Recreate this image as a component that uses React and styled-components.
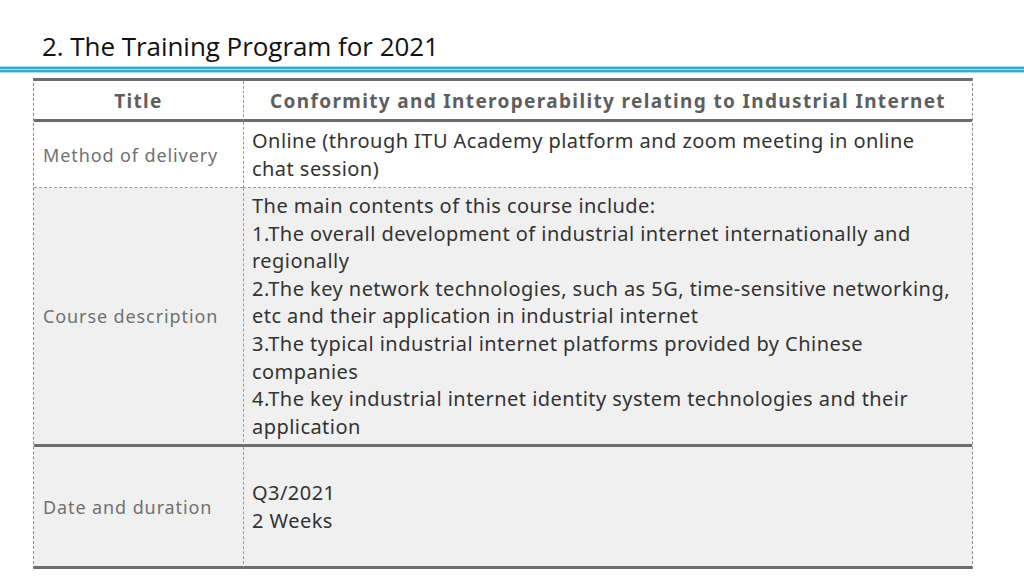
import React from 'react'
import styled, { createGlobalStyle } from 'styled-components'

const Global = createGlobalStyle`
  html, body {
    margin: 0;
    padding: 0;
    background: #fff;
  }
  body {
    width: 1024px;
    height: 576px;
    overflow: hidden;
    font-family: "Noto Sans", "Open Sans", sans-serif;
  }
`

const Slide = styled.div`
  display: flex;
  flex-direction: column;
  width: 1024px;
  height: 576px;
`

const Heading = styled.h1`
  margin: 0;
  padding: 29px 0 0 42px;
  height: 37px;
  font-family: "Open Sans", "Noto Sans", sans-serif;
  font-weight: 400;
  font-size: 26px;
  line-height: 34px;
  letter-spacing: -0.05px;
  color: #111;
`

const Rule = styled.div`
  height: 7px;
  background: linear-gradient(
    to bottom,
    #9fe0f4 0 1px,
    #2fa9d6 1px 3px,
    #a6e3f5 3px 4px,
    #2fa9d6 4px 6px,
    #9fe0f4 6px 7px
  );
`

const Table = styled.div`
  margin: 5px 0 0 33px;
  width: 938px;
  display: grid;
  grid-template-columns: 209px 1fr;
  border-top: 3px solid #6d6d6d;
  border-left: 1px dashed #8a8a8a;
  border-right: 1px dashed #8a8a8a;
`

const Row = styled.div`
  display: contents;
`

const Cell = styled.div`
  display: flex;
  align-items: center;
  background: ${p => (p.$shaded ? '#f0f0f0' : '#fff')};
  border-bottom: ${p => (p.$heavy ? '3px solid #6d6d6d' : '1px dashed #9a9a9a')};
  border-left: ${p => (p.$first ? 'none' : '1px dashed #9a9a9a')};
  height: ${p => p.$h}px;
  box-sizing: border-box;
`

const HeadCell = styled(Cell)`
  justify-content: center;
  padding-top: 2px;
  font-weight: 700;
  font-size: 19px;
  letter-spacing: 1.35px;
  color: #5e5e5e;
`

const Label = styled(Cell)`
  padding-left: 9px;
  font-size: 18px;
  letter-spacing: 0.9px;
  color: #707070;
`

const Body = styled(Cell)`
  padding: 0 8px;
  font-size: 20px;
  letter-spacing: 0.45px;
  line-height: 27.6px;
  color: #333;
  align-items: ${p => (p.$top ? 'flex-start' : 'center')};
  padding-top: ${p => (p.$top ? '4px' : '0')};
`

const Lines = styled.div`
  display: flex;
  flex-direction: column;
`

const rows = [
  {
    label: 'Method of delivery',
    h: 66,
    lines: ['Online (through ITU Academy platform and zoom meeting in online', 'chat session)'],
  },
  {
    label: 'Course description',
    h: 259,
    shaded: true,
    heavy: true,
    top: true,
    lines: [
      'The main contents of this course include:',
      '1.The overall development of industrial internet internationally and',
      'regionally',
      '2.The key network technologies, such as 5G, time-sensitive networking,',
      'etc and their application in industrial internet',
      '3.The typical industrial internet platforms provided by Chinese',
      'companies',
      '4.The key industrial internet identity system technologies and their',
      'application',
    ],
  },
  {
    label: 'Date and duration',
    h: 122,
    shaded: true,
    heavy: true,
    lines: ['Q3/2021', '2 Weeks'],
  },
]

export default function App() {
  return (
    <Slide>
      <Global />
      <Heading>2. The Training Program for 2021</Heading>
      <Rule />
      <Table>
        <Row>
          <HeadCell $first $heavy $h={41}>Title</HeadCell>
          <HeadCell $heavy $h={41}>Conformity and Interoperability relating to Industrial Internet</HeadCell>
        </Row>
        {rows.map(r => (
          <Row key={r.label}>
            <Label $first $shaded={r.shaded} $heavy={r.heavy} $h={r.h}>{r.label}</Label>
            <Body $shaded={r.shaded} $heavy={r.heavy} $h={r.h} $top={r.top}>
              <Lines>
                {r.lines.map(l => <span key={l}>{l}</span>)}
              </Lines>
            </Body>
          </Row>
        ))}
      </Table>
    </Slide>
  )
}
